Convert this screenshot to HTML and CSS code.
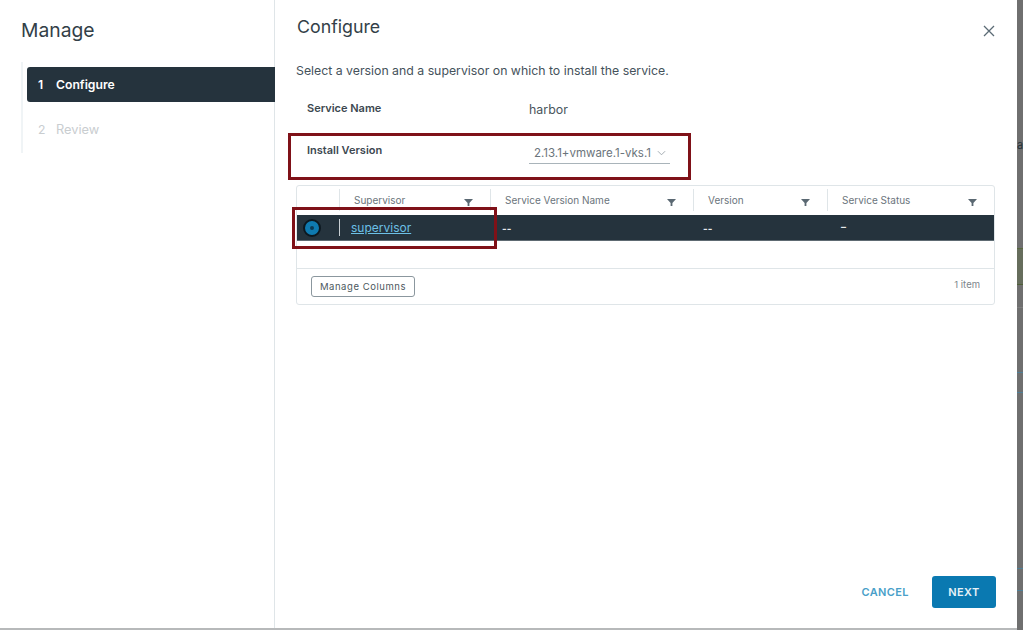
FILE: index.html
```html
<!DOCTYPE html>
<html lang="en">
<head>
<meta charset="utf-8">
<title>Manage</title>
<link rel="stylesheet" href="styles.css">
</head>
<body>
<div class="backdrop">
  <span class="peek peek-letter">a</span>
  <span class="peek peek-band"></span>
  <span class="peek peek-line-a"></span>
  <span class="peek peek-line-b"></span>
  <span class="peek peek-line-c"></span>
  <span class="peek peek-line-d"></span>
  <span class="peek peek-line-e"></span>
  <div class="dialog">
    <aside class="side">
      <h2 class="side-title">Manage</h2>
      <ol class="steps">
        <li class="step active"><span class="num">1</span>Configure</li>
        <li class="step"><span class="num">2</span><span class="step-review">Review</span></li>
      </ol>
    </aside>
    <main class="content">
      <header class="head">
        <h1 class="title">Configure</h1>
        <svg class="close" viewBox="0 0 12 12" width="12" height="12"><path d="M1 1l10 10M11 1L1 11" stroke="#5b6b75" stroke-width="1.3" fill="none"/></svg>
      </header>
      <p class="lead">Select a version and a supervisor on which to install the service.</p>
      <div class="form-row name-row">
        <span class="label">Service Name</span>
        <span class="value">harbor</span>
      </div>
      <div class="form-row version-row">
        <span class="label">Install Version</span>
        <span class="select">2.13.1+vmware.1-vks.1
          <svg viewBox="0 0 10 6" width="9" height="6"><path d="M1 1l4 4 4-4" stroke="#9aa3a9" fill="none"/></svg>
        </span>
        <span class="callout callout-version"></span>
      </div>
      <div class="grid">
        <div class="grid-row grid-head">
          <div class="cell c-radio"></div>
          <div class="cell c-sup"><span>Supervisor</span><svg class="filter" viewBox="0 0 10 10" width="9" height="9"><path d="M0 1h10L6 5.5V9H4V5.5z" fill="#5a6872"/></svg></div>
          <div class="cell c-name"><span>Service Version Name</span><svg class="filter" viewBox="0 0 10 10" width="9" height="9"><path d="M0 1h10L6 5.5V9H4V5.5z" fill="#5a6872"/></svg></div>
          <div class="cell c-ver"><span>Version</span><svg class="filter" viewBox="0 0 10 10" width="9" height="9"><path d="M0 1h10L6 5.5V9H4V5.5z" fill="#5a6872"/></svg></div>
          <div class="cell c-status"><span>Service Status</span><svg class="filter" viewBox="0 0 10 10" width="9" height="9"><path d="M0 1h10L6 5.5V9H4V5.5z" fill="#5a6872"/></svg></div>
        </div>
        <div class="grid-row grid-sel">
          <div class="cell c-radio"><span class="radio"></span></div>
          <div class="cell c-sup"><a class="link" href="#">supervisor</a></div>
          <div class="cell c-name">--</div>
          <div class="cell c-ver">--</div>
          <div class="cell c-status"><span class="dash">–</span></div>
        </div>
        <div class="grid-empty"></div>
        <div class="grid-foot">
          <button class="columns" type="button">Manage Columns</button>
          <span class="count">1 item</span>
        </div>
        <span class="callout callout-row"></span>
      </div>
      <footer class="actions">
        <button class="btn-link" type="button">CANCEL</button>
        <button class="btn-primary" type="button">NEXT</button>
      </footer>
    </main>
  </div>
</div>
</body>
</html>
```

FILE: styles.css
```css
* { box-sizing: border-box; }
html, body { margin: 0; height: 100%; }
body { font-family: Inter, "Open Sans", sans-serif; background: #6f6f6f; overflow: hidden; }
.backdrop { position: relative; width: 1023px; height: 630px; padding-right: 6px; }
.peek { position: absolute; left: 1017px; width: 6px; }
.peek-letter { top: 138px; height: 14px; overflow: hidden; font: 400 11px/14px Inter, sans-serif; color: #26323a; }
.peek-band { top: 248px; height: 37px; background: #666d5c; border-top: 1px solid #58683e; border-bottom: 1px solid #4f5f38; }
.peek-line-a { top: 307px; height: 1px; background: #7d7d7d; }
.peek-line-b { top: 372px; height: 1px; background: #4f7f96; }
.peek-line-c { top: 392px; height: 1px; background: #4f7f96; }
.peek-line-d { top: 568px; height: 1px; background: #4f7f96; }
.peek-line-e { top: 590px; height: 1px; background: #4f7f96; }
.dialog { position: relative; display: flex; width: 1017px; height: 630px; background: #fff; border-bottom: 2px solid #b7b9ba; }
.side { width: 275px; flex: none; border-right: 1px solid #dfe5e8; padding: 17px 0 0 21px; }
.side-title { margin: 0; font: 400 19.3px/26px Inter, sans-serif; color: #333f48; }
.steps { list-style: none; margin: 19px 0 0; padding: 5px 0; border-left: 2px solid #f0f4f6; width: 254px; height: 91px; }
.step { display: flex; align-items: center; height: 35px; margin-left: 4px; padding-left: 11px; font: 400 12.2px/16px Inter, sans-serif; color: #c9cdd0; margin-top: 10px; }
.step.active { background: #25333d; color: #fff; font-weight: 600; border-radius: 3px 0 0 3px; margin-top: 0; }
.step-review { font-size: 12.8px; }
.num { width: 18px; flex: none; }
.content { flex: 1; min-width: 0; padding: 0 21px; display: flex; flex-direction: column; }
.head { display: flex; justify-content: space-between; align-items: center; height: 44px; padding: 10px 1px 0; }
.title { margin: 0; font: 400 17.8px/24px Inter, sans-serif; color: #333f48; }
.close { margin: 8px 0 0; }
.lead { margin: 19px 0 0; font: 400 12.3px/16px Inter, sans-serif; color: #45525b; }
.form-row { display: flex; align-items: flex-start; position: relative; padding-left: 11px; }
.label { width: 222px; flex: none; font: 600 11px/16px Inter, sans-serif; color: #3c4850; }
.value { font: 400 12.4px/16px Inter, sans-serif; color: #4a555d; margin-top: 2px; }
.name-row { margin-top: 21px; height: 25px; }
.version-row { margin-top: 9px; height: 44px; padding-top: 8px; }
.select { width: 141px; height: 21px; margin-top: 1px; display: flex; justify-content: space-between; align-items: center; padding: 0 4px 0 5px; border-bottom: 1px solid #a9b4ba; font: 400 11.5px/16px Inter, sans-serif; color: #6a747b; white-space: nowrap; }
.callout { position: absolute; border: 3px solid #7f1118; pointer-events: none; }
.callout-version { left: -8px; top: -1px; width: 403px; height: 47px; }
.callout-row { left: -5px; top: 21px; width: 205px; height: 42px; }
.grid { position: relative; margin-top: 7px; width: 699px; height: 120px; border: 1px solid #dfe5e8; border-radius: 3px; display: flex; flex-direction: column; }
.grid-row { display: flex; }
.grid-head { height: 29px; }
.cell { display: flex; align-items: center; justify-content: space-between; font: 400 10px/14px Inter, sans-serif; color: #6b757c; padding: 0 17px 0 14px; position: relative; }
.grid-head .cell { height: 22px; margin-top: 3px; }
.grid-head .cell + .cell { border-left: 1px solid #dfe5e8; }
.filter { margin-top: 4px; }
.c-radio { width: 42px; flex: none; }
.c-sup { width: 151px; flex: none; }
.c-name { width: 203px; flex: none; }
.c-ver { width: 134px; flex: none; }
.c-status { flex: 1; }
.grid-sel { height: 26px; background: #25333d; border-bottom: 1px solid #5e6a72; }
.grid-sel .cell { color: #e6e9eb; font-weight: 700; justify-content: flex-start; }
.grid-sel .c-name { padding-left: 12px; }
.grid-sel .c-ver { padding-left: 10px; }
.grid-sel .c-radio { padding: 0 0 0 6px; }
.grid-sel .c-sup { padding-left: 12px; }
.grid-sel .c-sup::before { content: ""; position: absolute; left: 0; top: 4px; bottom: 4px; width: 1px; background: #c9d0d4; }
.dash { margin-top: -3px; }
.radio { width: 18px; height: 18px; border-radius: 50%; background: #0f7ab0; border: 2px solid #0c1820; position: relative; display: block; }
.radio::after { content: ""; position: absolute; left: 5px; top: 5px; width: 4px; height: 4px; border-radius: 50%; background: #0c3a55; }
.link { font: 400 12px/16px Inter, sans-serif; color: #6cc0e6; text-decoration: underline; }
.grid-empty { height: 28px; border-bottom: 1px solid #dfe5e8; }
.grid-foot { flex: 1; display: flex; justify-content: space-between; align-items: center; padding: 0 14px; }
.columns { height: 21px; width: 104px; padding: 0; background: #fff; border: 1px solid #8b979e; border-radius: 3px; font: 400 9.5px/14px Inter, sans-serif; letter-spacing: .55px; color: #4c5860; }
.count { font: 400 9.5px/14px Inter, sans-serif; color: #7c868c; margin-top: -3px; }
.actions { margin-top: auto; margin-bottom: 20px; display: flex; justify-content: flex-end; align-items: center; gap: 23px; }
.btn-link { background: none; border: 0; padding: 0; font: 600 11px/16px Inter, sans-serif; letter-spacing: .4px; color: #4a9fc9; }
.btn-primary { width: 64px; height: 32px; background: #0a79b1; border: 0; border-radius: 3px; color: #e7f1f7; font: 600 11px/16px Inter, sans-serif; letter-spacing: .4px; }
```
